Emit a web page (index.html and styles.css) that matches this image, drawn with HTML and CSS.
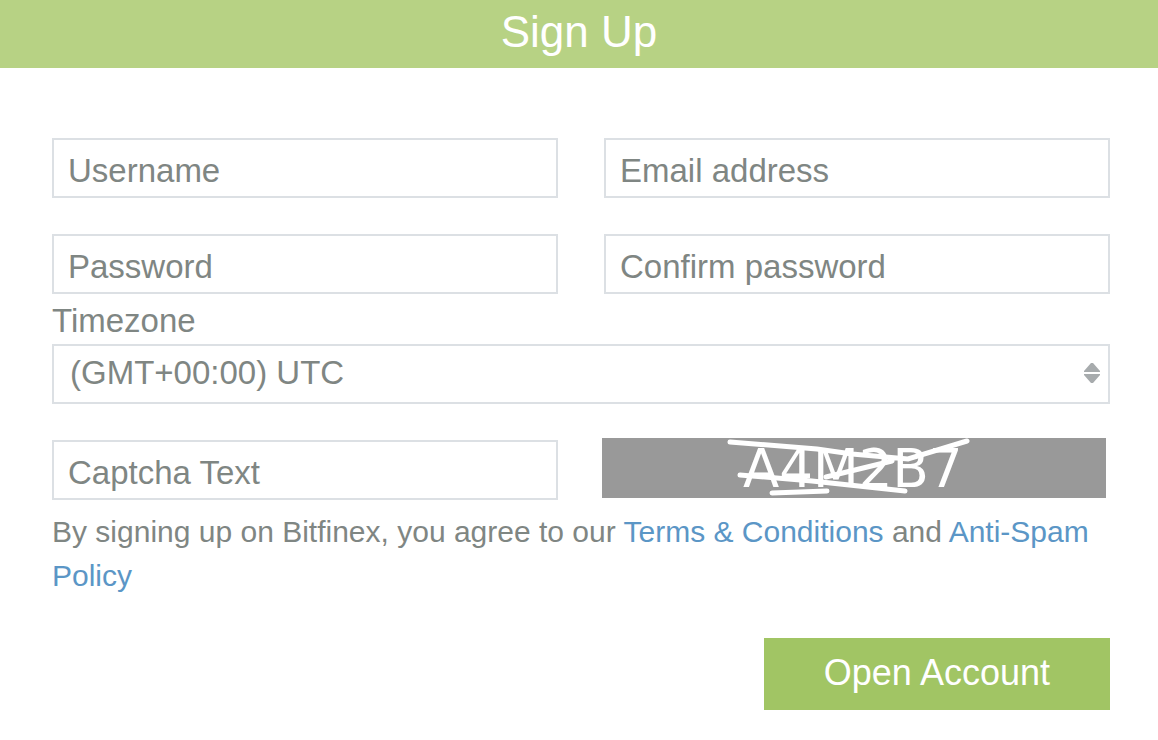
FILE: index.html
```html
<!DOCTYPE html>
<html lang="en">
<head>
  <meta charset="UTF-8">
  <meta name="viewport" content="width=device-width, initial-scale=1.0">
  <title>Sign Up - Bitfinex</title>
  <link rel="stylesheet" href="styles.css">
</head>
<body>
  <header>
    <h1>Sign Up</h1>
  </header>

  <form class="signup-form">
    <div class="fields">
      <input type="text" name="username" placeholder="Username" aria-label="Username">
      <input type="email" name="email" placeholder="Email address" aria-label="Email address">
      <input type="password" name="password" placeholder="Password" aria-label="Password">
      <input type="password" name="confirm" placeholder="Confirm password" aria-label="Confirm password">
    </div>

    <label for="timezone">Timezone</label>
    <div class="select-wrap">
      <select id="timezone" name="timezone">
        <option>(GMT+00:00) UTC</option>
      </select>
      <svg class="arrows" viewBox="0 0 16 20" aria-hidden="true">
        <path d="M0 9V8L7 0h2l7 8v1zM0 11h16v1l-7 8H7l-7-8z" fill="#a7abad"/>
      </svg>
    </div>

    <div class="captcha-row">
      <input type="text" name="captcha" placeholder="Captcha Text" aria-label="Captcha Text">
      <div class="captcha">
        <svg viewBox="0 0 504 60" role="img" aria-label="Captcha">
          <text x="141" y="49">A4M2B7</text>
          <path d="M128 4L215 11L250 16L306 21L365 3M290 23L224 39M138 37L210 43L303 53M170 55L225 53"/>
        </svg>
      </div>
    </div>

    <p class="terms">By signing up on Bitfinex, you agree to our <a href="#">Terms &amp; Conditions</a> and <a href="#">Anti-Spam Policy</a></p>

    <div class="actions">
      <button type="submit">Open Account</button>
    </div>
  </form>
</body>
</html>
```
FILE: styles.css
```css
* {
  box-sizing: border-box;
}
body {
  margin: 0;
  font-family: "Liberation Sans", Arial, sans-serif;
  font-size: 33px;
  background: #fff;
  color: #7f8683;
}
header {
  background: #b7d284;
  text-align: center;
}
header h1 {
  margin: 0;
  padding-bottom: 4px;
  font-size: 44px;
  font-weight: normal;
  line-height: 64px;
  color: #fff;
}
.signup-form {
  padding: 70px 48px 30px 52px;
}
.fields {
  display: grid;
  grid-template-columns: 1fr 1fr;
  gap: 36px 46px;
}
input,
select {
  width: 100%;
  height: 60px;
  margin: 0;
  border: 2px solid #dce0e4;
  border-radius: 0;
  background: #fff;
  color: #7f8683;
  font: inherit;
}
input {
  padding: 6px 14px 0;
}
input::placeholder {
  color: #7f8683;
  opacity: 1;
}
label {
  display: block;
  padding: 7px 0 3px;
  line-height: 40px;
}
.select-wrap {
  position: relative;
}
select {
  appearance: none;
  padding: 0 40px 4px 16px;
}
/* sits over the right end of the select */
.arrows {
  position: absolute;
  top: 19px;
  right: 10px;
  width: 16px;
  height: 20px;
  pointer-events: none;
}
.captcha-row {
  display: grid;
  grid-template-columns: 1fr 1fr;
  gap: 46px;
  align-items: end;
  padding-top: 34px;
}
.captcha {
  height: 60px;
  margin: 0 4px 2px -2px;
  background: #999;
}
.captcha svg {
  display: block;
  width: 100%;
  height: 60px;
}
.captcha text {
  font-family: "DejaVu Sans", sans-serif;
  font-size: 53px;
  fill: #fff;
}
.captcha path {
  fill: none;
  stroke: #fff;
  stroke-width: 5;
  stroke-linecap: round;
}
.terms {
  margin: 0;
  padding: 10px 0 40px;
  font-size: 30px;
  line-height: 44px;
}
.terms a {
  color: #5b96c6;
  text-decoration: none;
}
.actions {
  display: flex;
  justify-content: flex-end;
}
button {
  height: 72px;
  padding: 0 60px 2px;
  border: 0;
  background: #a1c564;
  color: #fff;
  font: inherit;
  font-size: 36px;
}
```
